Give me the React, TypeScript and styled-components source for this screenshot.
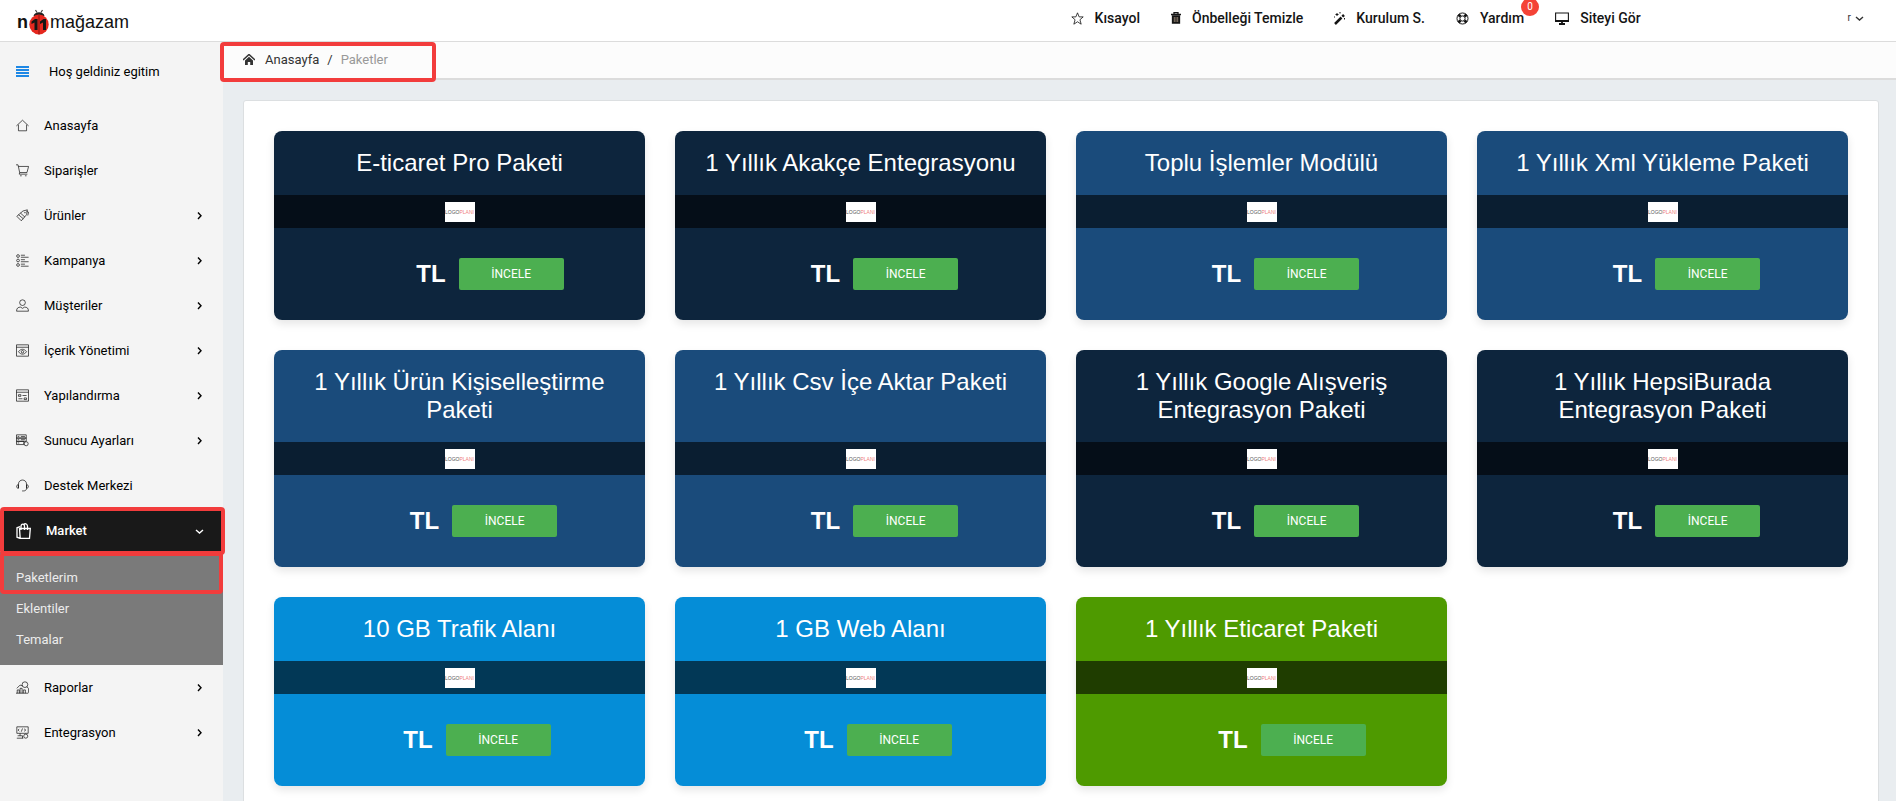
import React from "react";
import styled, { createGlobalStyle } from "styled-components";

const Global = createGlobalStyle`
  *, *::before, *::after { box-sizing: border-box; }
  html, body { margin: 0; padding: 0; }
  html { overflow: hidden; }
  body {
    background: #e9edf0;
    color: #000;
    font: 13px/20px Roboto, "Liberation Sans", sans-serif;
  }
  a { color: inherit; text-decoration: none; }
  button { font: inherit; cursor: pointer; }
  ul, ol, h2, p { margin: 0; padding: 0; list-style: none; }
  svg { display: block; flex: none; }
`;

const Page = styled.div`
  min-height: 100vh;
  display: flex;
  flex-direction: column;
`;

const Header = styled.header`
  height: 42px;
  display: flex;
  align-items: flex-start;
  justify-content: space-between;
  padding: 0 32px 0 17px;
  background: #fff;
  border-bottom: 1px solid #dcdcdc;
`;

const Brand = styled.a`
  display: flex;
  align-items: center;
  gap: 1px;
  height: 42px;
  padding-top: 2px;
  font: 18px/24px "Liberation Sans", Arial, sans-serif;
  color: #111;
`;

const BrandLead = styled.b`
  font-weight: 700;
`;

const TopNav = styled.nav`
  display: flex;
  align-items: center;
  gap: 31px;
  height: 36px;
`;

const TopLink = styled.a`
  position: relative;
  display: flex;
  align-items: center;
  gap: 11px;
  font-size: 14px;
  font-weight: 500;
  color: #151515;
`;

const Count = styled.span`
  position: absolute;
  right: -15px;
  top: -10px;
  width: 18px;
  height: 18px;
  border-radius: 9px;
  background: #f44336;
  color: #fff;
  font-size: 10px;
  line-height: 18px;
  font-weight: 400;
  text-align: center;
`;

const UserButton = styled.button`
  display: flex;
  align-items: center;
  gap: 4px;
  margin-left: 176px;
  padding: 0;
  border: 0;
  background: none;
  color: #333;
  font-size: 10px;
`;

const Body = styled.div`
  flex: 1;
  display: flex;
`;

const Sidebar = styled.aside`
  flex: none;
  width: 223px;
  background: #f4f4f4;
`;

const Welcome = styled.div`
  display: flex;
  align-items: center;
  gap: 20px;
  height: 59px;
  padding: 0 16px;
`;

const Menu = styled.ul`
  && { padding-top: 2px; }
`;

const MenuRow = styled.a<{ $active?: boolean }>`
  display: flex;
  align-items: center;
  gap: 15px;
  height: 45px;
  padding: 0 19px 0 16px;
  ${(p) =>
    p.$active &&
    `position: relative; z-index: 1; height: 48px; margin: -1px -2px 0 0; padding: 0 17px 0 12px;
     background: #191919; color: #fff; font-weight: 500; border: 4px solid #f23c3c; border-radius: 4px;`}
`;

const MenuText = styled.span`
  flex: 1;
`;

const SubMenu = styled.ul`
  && {
    height: 113px;
    margin-top: -3px;
  }
  background: #7a7a7a;
  color: #ececec;
`;

const SubLink = styled.a<{ $marked?: boolean }>`
  display: block;
  height: 31px;
  padding: 5px 16px;
  line-height: 20px;
  ${(p) =>
    p.$marked &&
    "height: 42px; padding: 12px 12px 0; border: 4px solid #f23c3c; border-radius: 4px;"}
`;

const Main = styled.main`
  flex: 1;
  min-width: 0;
`;

const CrumbBar = styled.nav`
  height: 38px;
  background: #fcfcfc;
  border-bottom: 2px solid #dcdcdc;
`;

const Crumbs = styled.ol`
  position: relative;
  && {
    display: flex;
    align-items: center;
    gap: 8px;
    width: 216px;
    height: 40px;
    margin-left: -3px;
    padding: 0 18px 4px 19px;
  }
  border: 4px solid #f23c3c;
  border-radius: 4px;
  color: #333;
`;

const Crumb = styled.li<{ $muted?: boolean }>`
  color: ${(p) => (p.$muted ? "#999" : "inherit")};
`;

const CrumbLink = styled.a`
  display: flex;
  align-items: center;
  gap: 10px;
`;

const Panel = styled.section`
  margin: 20px 17px 0 20px;
  padding: 30px 30px 40px;
  background: #fff;
  border: 1px solid #dcdfe1;
  border-radius: 3px;
`;

const Grid = styled.div`
  display: grid;
  grid-template-columns: repeat(4, minmax(0, 1fr));
  gap: 30px;
`;

const Card = styled.article<{ $color: string }>`
  display: flex;
  flex-direction: column;
  overflow: hidden;
  border-radius: 8px;
  background: ${(p) => p.$color};
  color: #fff;
  font-family: "Liberation Sans", Arial, sans-serif;
  box-shadow: 0 4px 8px rgba(0, 0, 0, 0.1);
`;

const CardTitle = styled.h2`
  && {
    flex: 1;
    padding: 18px 30px;
  }
  font-size: 24px;
  line-height: 28px;
  font-weight: 400;
  text-align: center;
`;

const LogoBand = styled.div`
  display: flex;
  justify-content: center;
  padding: 7px 0 6px;
  background: rgba(0, 0, 0, 0.6);
`;

const LogoTile = styled.div`
  width: 30px;
  height: 20px;
  background: #fff;
  color: #555;
  font-size: 5px;
  line-height: 20px;
  text-align: center;
`;

const LogoAccent = styled.span`
  color: #ef7f7f;
`;

const CardFoot = styled.div`
  display: flex;
  align-items: center;
  justify-content: center;
  height: 92px;
`;

const Price = styled.p<{ $digits: number }>`
  && {
    padding-left: ${(p) => p.$digits * 13 + 9}px;
    margin-right: 13px;
  }
  font-size: 24px;
  line-height: 32px;
  font-weight: 700;
`;

const Inspect = styled.button`
  width: 105px;
  height: 32px;
  padding: 0;
  border: 0;
  border-radius: 2px;
  background: #4caf50;
  color: #fff;
  font: 12px/20px Roboto, "Liberation Sans", sans-serif;
`;

type LineProps = { size?: number; w?: number; width?: number; view?: string; children: React.ReactNode };

const Line = ({ size = 13, w = size, width = 1.2, view = "0 0 16 16", children }: LineProps) => (
  <svg width={w} height={size} viewBox={view} fill="none" stroke="currentColor" strokeWidth={width} aria-hidden="true">
    {children}
  </svg>
);

const Ladybug = () => (
  <svg width="20" height="26" viewBox="0 0 20 26" aria-hidden="true">
    <path d="M8 3.500 6.500 1M12 3.500 13.500 1" stroke="#444" strokeWidth="1.200" />
    <path d="M4.500 7c1-5 10-5 11 0z" fill="#222" />
    <ellipse cx="10" cy="15.500" rx="9.700" ry="10" fill="#e5281f" />
    <path d="M10 5.500v20" stroke="#8d1510" strokeWidth="1" />
    <path d="M2.500 12.500 6 10h2.500v11h-3v-7.500l-3 1.500zM11 12.500l3.500-2.500H17v11h-3v-7.500L11 15z" fill="#151515" />
  </svg>
);

const menuIcons: Record<string, React.ReactNode> = {
  home: <path d="M.5 8.500 8 1.500l7.500 7M3 7v7.500h10V7" />,
  cart: <path d="M0 1h2.500l2 9.500h9l2-7.500H3M4.500 10.500 4 12.500h10M5 14.500h2M11 14.500h2" />,
  tag: <path d="M1 9 8.500 2.500 14 1l-1 6-6.500 7.500zM3 7l6 5M5.500 5l5.500 5M10 4.500h2M13 3l2.500 1-1 4" />,
  list: <><circle cx="2.500" cy="2.500" r="1.700" /><circle cx="2.500" cy="8" r="1.700" /><circle cx="2.500" cy="13.500" r="1.700" /><path d="M6 1.500h5M6 4h9.500M6 7h5M6 9.500h9.500M6 12.500h5M6 15h9.500" /></>,
  user: <><circle cx="8" cy="4.500" r="3.500" /><path d="M.7 15c0-4 2-5 5-5L8 11.500 10.500 10c3 0 4.800 1 4.800 5z" /></>,
  view: <><path d="M.6 1h14.800v14H.6zM.6 4h14.800M3 9.500c3-4 7-4 10 0-3 4-7 4-10 0z" /><circle cx="8" cy="9.500" r="1.500" /></>,
  config: <path d="M.6 1h14.800v14H.6zM.6 4h14.800M3 7h3v2H3zM8 8h5M3 12h5M10 11h3v2h-3z" />,
  server: <><path d="M.6 1h12v4H.6zM.6 5h12v4H.6zM.6 9h9v4H.6zM2 3h2M6 3h5M2 7h2M6 7h5M2 11h2" /><circle cx="12.500" cy="12" r="2.500" /></>,
  support: <path d="M3 11V6.500c0-7 10-7 10 0V11M3 7C0 7 0 11.500 3 11.500zM13 7c3 0 3 4.500 0 4.500zM13 11.500c0 2-1.500 3.200-4 3.200H7.500" />,
  report: <><path d="M0 15h15M1.500 15v-4H4v4M5 15V9h2.500v6M9 15v-4h2.500v4M1 9l4-4 3 1" /><circle cx="11" cy="4.500" r="3.500" /><path d="m13.500 7 2 2.500v5" /></>,
  link: <><path d="M1 1h14v8H1zM4 3.500 2.500 5 4 6.500M8 3 6.500 7M10 3.500 12 5l-2 1.500M1 15h8M2 12h6v3M5 9v3" /><circle cx="12" cy="12.500" r="2.500" /></>,
};

const MarketIcon = () => (
  <Line size={16} w={15} width={1.3} view="0 0 15 16">
    <path d="M3.500 5.500h10.800l-.8 9.800H4.200zM4 15.300 1 14.200V4.800l3-1.300M5 7V3.500C5 .2 8.500.2 8.500 3.500V7M7.500 1.500c2-1.500 4-.5 4 2V7" />
  </Line>
);

const Chevron = ({ down = false }: { down?: boolean }) => (
  <svg width="9" height="9" viewBox="0 0 9 9" fill="none" stroke="currentColor" strokeWidth="1.400" aria-hidden="true">
    <path d={down ? "m1 3 3.500 3L8 3" : "m3 1.500 3 3.300-3 3.200"} />
  </svg>
);

const topIcons: Record<string, React.ReactNode> = {
  star: <Line size={13} width={1}><path d="m8 1 2 5h5l-4 3.500 1.500 5.500L8 12l-4.500 3L5 9.500 1 6h5z" /></Line>,
  trash: (
    <Line size={12} w={10} width={1.3} view="0 0 10 12">
      <path d="M0 2.500h10M3 2V.7h4V2" />
      <path d="M1.500 4h7v7h-7z" fill="currentColor" />
      <path d="M3.300 5v5M5 5v5M6.700 5v5" stroke="#b9a48e" strokeWidth=".7" />
    </Line>
  ),
  wand: (
    <Line size={13} w={11} width={1} view="0 0 11 13">
      <path d="M1 12 7.500 5.500" strokeWidth="2.500" />
      <path d="m8.300 4.700 1.700-1.700" strokeWidth="2.500" />
      <path d="M3 1v3M1.500 2.500h3M6 0v1.500M10.500 6v1.500M0 5h1" />
    </Line>
  ),
  ring: <Line size={13}><circle cx="8" cy="8" r="6.800" /><circle cx="8" cy="8" r="3.200" /><path d="m3 3 2.500 2.500m5 5L13 13m0-10-2.500 2.500m-5 5L3 13" strokeWidth="3.500" /></Line>,
  screen: (
    <Line size={13} w={14} width={1.1} view="0 0 14 13">
      <path d="M.6 1h12.800v8.500H.6z" />
      <path d="M0 9h14" strokeWidth="2" />
      <path d="M4 12h6M7 9v3" strokeWidth="1.800" />
    </Line>
  ),
};

const topLinks = [
  { icon: "star", text: "Kısayol" },
  { icon: "trash", text: "Önbelleği Temizle" },
  { icon: "wand", text: "Kurulum S." },
  { icon: "ring", text: "Yardım", count: 0 },
  { icon: "screen", text: "Siteyi Gör" },
];

const menu = [
  { icon: "home", text: "Anasayfa" },
  { icon: "cart", text: "Siparişler" },
  { icon: "tag", text: "Ürünler", more: true },
  { icon: "list", text: "Kampanya", more: true },
  { icon: "user", text: "Müşteriler", more: true },
  { icon: "view", text: "İçerik Yönetimi", more: true },
  { icon: "config", text: "Yapılandırma", more: true },
  { icon: "server", text: "Sunucu Ayarları", more: true },
  { icon: "support", text: "Destek Merkezi" },
];

const menuEnd = [
  { icon: "report", text: "Raporlar", more: true },
  { icon: "link", text: "Entegrasyon", more: true },
];

const tones = {
  navy: "#0d253d",
  blue: "#1a4b7b",
  sky: "#058dd7",
  green: "#4e9a00",
};

const packs: { title: string; tone: keyof typeof tones; digits: number }[] = [
  { title: "E-ticaret Pro Paketi", tone: "navy", digits: 4 },
  { title: "1 Yıllık Akakçe Entegrasyonu", tone: "navy", digits: 3 },
  { title: "Toplu İşlemler Modülü", tone: "blue", digits: 3 },
  { title: "1 Yıllık Xml Yükleme Paketi", tone: "blue", digits: 3 },
  { title: "1 Yıllık Ürün Kişiselleştirme Paketi", tone: "blue", digits: 3 },
  { title: "1 Yıllık Csv İçe Aktar Paketi", tone: "blue", digits: 3 },
  { title: "1 Yıllık Google Alışveriş Entegrasyon Paketi", tone: "navy", digits: 3 },
  { title: "1 Yıllık HepsiBurada Entegrasyon Paketi", tone: "navy", digits: 3 },
  { title: "10 GB Trafik Alanı", tone: "sky", digits: 2 },
  { title: "1 GB Web Alanı", tone: "sky", digits: 2 },
  { title: "1 Yıllık Eticaret Paketi", tone: "green", digits: 4 },
];

const MenuItem = ({ icon, text, more }: { icon: string; text: string; more?: boolean }) => (
  <li>
    <MenuRow href="#">
      <Line width={0.8}>{menuIcons[icon]}</Line>
      <MenuText>{text}</MenuText>
      {more && <Chevron />}
    </MenuRow>
  </li>
);

export default function App() {
  return (
    <Page>
      <Global />
      <Header>
        <Brand href="#">
          <BrandLead>n</BrandLead>
          <Ladybug />
          mağazam
        </Brand>
        <TopNav>
          {topLinks.map((l) => (
            <TopLink key={l.text} href="#">
              {topIcons[l.icon]}
              {l.text}
              {l.count !== undefined && <Count>{l.count}</Count>}
            </TopLink>
          ))}
          <UserButton>r<Chevron down /></UserButton>
        </TopNav>
      </Header>
      <Body>
        <Sidebar>
          <Welcome>
            <svg width="13" height="11" viewBox="0 0 13 11" aria-hidden="true">
              <path d="M0 1h13M0 4h13M0 7h13M0 10h13" stroke="#1e88e5" strokeWidth="2" />
            </svg>
            Hoş geldiniz egitim
          </Welcome>
          <Menu>
            {menu.map((m) => <MenuItem key={m.text} {...m} />)}
            <li>
              <MenuRow href="#" $active>
                <MarketIcon />
                <MenuText>Market</MenuText>
                <Chevron down />
              </MenuRow>
              <SubMenu>
                <li><SubLink href="#" $marked>Paketlerim</SubLink></li>
                <li><SubLink href="#">Eklentiler</SubLink></li>
                <li><SubLink href="#">Temalar</SubLink></li>
              </SubMenu>
            </li>
            {menuEnd.map((m) => <MenuItem key={m.text} {...m} />)}
          </Menu>
        </Sidebar>
        <Main>
          <CrumbBar aria-label="Breadcrumb">
            <Crumbs>
              <Crumb>
                <CrumbLink href="#">
                  <svg width="12" height="12" viewBox="0 0 12 12" aria-hidden="true">
                    <path d="m0 6 6-5.500L12 6" fill="none" stroke="currentColor" strokeWidth="1.500" />
                    <path d="m2 6.500 4-3.700 4 3.700V11H7.200V8H4.800v3H2z" fill="currentColor" />
                  </svg>
                  Anasayfa
                </CrumbLink>
              </Crumb>
              <li aria-hidden="true">/</li>
              <Crumb $muted>Paketler</Crumb>
            </Crumbs>
          </CrumbBar>
          <Panel>
            <Grid>
              {packs.map((p) => (
                <Card key={p.title} $color={tones[p.tone]}>
                  <CardTitle>{p.title}</CardTitle>
                  <LogoBand>
                    <LogoTile>LOGO<LogoAccent>PLANI</LogoAccent></LogoTile>
                  </LogoBand>
                  <CardFoot>
                    <Price $digits={p.digits}>TL</Price>
                    <Inspect>İNCELE</Inspect>
                  </CardFoot>
                </Card>
              ))}
            </Grid>
          </Panel>
        </Main>
      </Body>
    </Page>
  );
}
